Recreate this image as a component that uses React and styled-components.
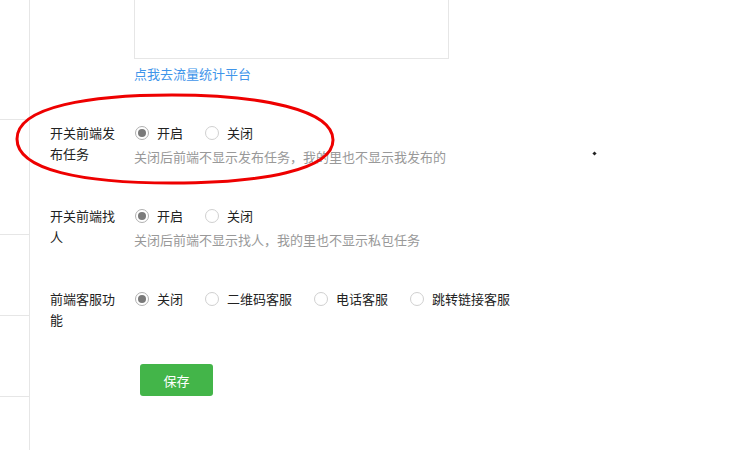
import React, { useState } from 'react';
import styled, { createGlobalStyle } from 'styled-components';

const GlobalStyle = createGlobalStyle`
  html, body {
    margin: 0;
    padding: 0;
    background: #fff;
  }
  body {
    font-family: "Noto Sans CJK SC", "Noto Sans", "Liberation Sans", sans-serif;
    font-size: 13px;
    color: #333;
  }
`;

const Page = styled.div`
  position: relative;
  display: flex;
  height: 450px;
  overflow: hidden;
`;

const Sidebar = styled.div`
  width: 29px;
  flex: none;
  border-right: 1px solid #e6e6e6;
`;

const SideItem = styled.div`
  height: ${p => p.$h}px;
  border-bottom: 1px solid #e6e6e6;
`;

const Main = styled.div`
  flex: 1;
  padding-left: 20px;
`;

const Form = styled.div`
  margin-top: -41px;
`;

const Row = styled.div`
  display: flex;
  margin-top: ${p => (p.$first ? 0 : 38)}px;
`;

const Label = styled.div`
  width: 70px;
  padding-right: 14px;
  flex: none;
  line-height: 21px;
  color: #222;
`;

const Field = styled.div`
  display: flex;
  flex-direction: column;
`;

const TextBox = styled.div`
  width: 313px;
  height: 98px;
  border: 1px solid #e6e6e6;
`;

const Link = styled.a`
  margin-top: 5px;
  line-height: 20px;
  color: #3f95ea;
  text-decoration: none;
  cursor: pointer;
`;

const RadioLine = styled.div`
  display: flex;
  align-items: center;
  height: 21px;
`;

const RadioItem = styled.label`
  display: flex;
  align-items: center;
  margin-right: 21px;
  cursor: pointer;
  color: #222;
`;

const Circle = styled.span`
  box-sizing: border-box;
  width: 14px;
  height: 14px;
  margin: 0 8px 0 1px;
  border-radius: 50%;
  border: 1px solid ${p => (p.$on ? '#b0b0b0' : '#d0d0d0')};
  display: flex;
  align-items: center;
  justify-content: center;
  background: #fff;

  &::after {
    content: '';
    width: 8px;
    height: 8px;
    border-radius: 50%;
    background: #7a7a7a;
    display: ${p => (p.$on ? 'block' : 'none')};
  }
`;

const Help = styled.div`
  margin-top: 4px;
  line-height: 20px;
  color: #999;
`;

const Actions = styled.div`
  margin: 34px 0 0 90px;
`;

const SaveButton = styled.button`
  width: 73px;
  height: 32px;
  border: none;
  border-radius: 3px;
  background: #43b549;
  color: #fff;
  font-family: inherit;
  font-size: 13px;
  cursor: pointer;
`;

const Ellipse = styled.svg`
  position: absolute;
  left: 12px;
  top: 92px;
  pointer-events: none;
`;

const Speck = styled.span`
  position: absolute;
  left: 593px;
  top: 152px;
  width: 3px;
  height: 3px;
  background: #222;
  transform: rotate(45deg);
`;

const RadioGroup = ({ options, value, onChange }) => (
  <RadioLine>
    {options.map(o => (
      <RadioItem key={o} onClick={() => onChange(o)}>
        <Circle $on={value === o} />
        {o}
      </RadioItem>
    ))}
  </RadioLine>
);

export default function App() {
  const [task, setTask] = useState('开启');
  const [find, setFind] = useState('开启');
  const [service, setService] = useState('关闭');

  return (
    <>
      <GlobalStyle />
      <Page>
        <Sidebar>
          <SideItem $h={119} />
          <SideItem $h={114} />
          <SideItem $h={80} />
          <SideItem $h={80} />
        </Sidebar>
        <Main>
          <Form>
            <Row $first>
              <Label />
              <Field>
                <TextBox />
                <Link>点我去流量统计平台</Link>
              </Field>
            </Row>
            <Row>
              <Label>开关前端发布任务</Label>
              <Field>
                <RadioGroup options={['开启', '关闭']} value={task} onChange={setTask} />
                <Help>关闭后前端不显示发布任务，我的里也不显示我发布的</Help>
              </Field>
            </Row>
            <Row>
              <Label>开关前端找人</Label>
              <Field>
                <RadioGroup options={['开启', '关闭']} value={find} onChange={setFind} />
                <Help>关闭后前端不显示找人，我的里也不显示私包任务</Help>
              </Field>
            </Row>
            <Row>
              <Label>前端客服功能</Label>
              <Field>
                <RadioGroup
                  options={['关闭', '二维码客服', '电话客服', '跳转链接客服']}
                  value={service}
                  onChange={setService}
                />
              </Field>
            </Row>
            <Actions>
              <SaveButton>保存</SaveButton>
            </Actions>
          </Form>
        </Main>
        <Ellipse width="326" height="96" viewBox="0 0 326 96">
          <path
            d="M5 47 C 5 14, 80 3, 160 3 C 250 3, 321 18, 321 48 C 321 78, 250 91, 160 91 C 70 91, 5 78, 5 47 Z"
            fill="none"
            stroke="#ee0000"
            strokeWidth="3"
          />
        </Ellipse>
        <Speck />
      </Page>
    </>
  );
}
